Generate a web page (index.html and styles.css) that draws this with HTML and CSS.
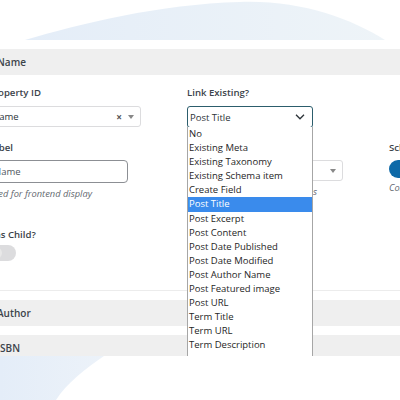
FILE: index.html
```html
<!DOCTYPE html>
<html>
<head>
<meta charset="utf-8">
<link rel="stylesheet" href="styles.css">
</head>
<body>
<div class="deco-top">
  <svg width="400" height="40" viewBox="0 0 400 40">
    <defs>
      <linearGradient id="gt" x1="0" x2="1" y1="0" y2="0">
        <stop offset="0" stop-color="#e4edf8"/>
        <stop offset="1" stop-color="#eef4f8"/>
      </linearGradient>
    </defs>
    <path d="M25 40 C 80 24 160 4 240 2 C 300 0 350 18 385 40 Z" fill="url(#gt)"/>
  </svg>
</div>
<div class="panel">
  <div class="band"></div>
  <div class="section-head">Name</div>
  <div class="fields">
    <div class="row row-1">
      <div class="field f-id">
        <label class="lbl">Property ID</label>
        <div class="s2">
          <span class="s2-text">Name</span>
          <span class="s2-clear">×</span>
          <span class="s2-arrow"></span>
        </div>
      </div>
      <div class="field f-link">
        <label class="lbl">Link Existing?</label>
        <div class="select-wrap">
          <div class="native-select">
            <span>Post Title</span>
            <svg class="chev" width="10" height="6" viewBox="0 0 10 6"><polyline points="1,0.8 5,4.8 9,0.8" fill="none" stroke="#2c3338" stroke-width="1.3"/></svg>
          </div>
          <ul class="dropdown">
            <li>No</li>
            <li>Existing Meta</li>
            <li>Existing Taxonomy</li>
            <li>Existing Schema item</li>
            <li>Create Field</li>
            <li class="sel">Post Title</li>
            <li>Post Excerpt</li>
            <li>Post Content</li>
            <li>Post Date Published</li>
            <li>Post Date Modified</li>
            <li>Post Author Name</li>
            <li>Post Featured image</li>
            <li>Post URL</li>
            <li>Term Title</li>
            <li>Term URL</li>
            <li>Term Description</li>
          </ul>
        </div>
      </div>
    </div>
    <div class="row row-2">
      <div class="field f-label">
        <label class="lbl">Label</label>
        <div class="input">Name</div>
        <p class="desc">Used for frontend display</p>
      </div>
      <div class="field f-type">
        <span class="lbl"></span>
        <div class="s2 s2-plain">
          <span class="s2-text"></span>
          <span class="s2-arrow"></span>
        </div>
        <p class="desc">s</p>
      </div>
      <div class="field f-schema">
        <label class="lbl">Schema</label>
        <div class="toggle on"><span class="knob"></span></div>
        <p class="desc">Connect</p>
      </div>
    </div>
    <div class="row row-3">
      <div class="field">
        <label class="lbl">Has Child?</label>
        <div class="toggle off"><span class="knob"></span></div>
      </div>
    </div>
  </div>
  <div class="section-head next">Author</div>
  <div class="section-head next">ISBN</div>
</div>
<div class="deco-bottom">
  <svg width="400" height="44" viewBox="0 0 400 44">
    <defs>
      <linearGradient id="gb" x1="0" x2="1" y1="0" y2="0">
        <stop offset="0" stop-color="#e4edf8"/>
        <stop offset="1" stop-color="#ecf2f9"/>
      </linearGradient>
    </defs>
    <path d="M0 0 L 104 0 C 86 12 66 28 56 44 L 0 44 Z" fill="url(#gb)"/>
  </svg>
</div>
</body>
</html>
```

FILE: styles.css
```css
* { box-sizing: border-box; }
html, body {
  margin: 0;
  padding: 0;
}
body {
  width: 400px;
  height: 400px;
  overflow: hidden;
  background: #ffffff;
  font-family: "Open Sans", "Noto Sans", sans-serif;
  font-size: 9.5px;
  color: #3c434a;
}
.deco-top, .deco-bottom { display: block; line-height: 0; }
.deco-top { height: 40px; }
.deco-bottom { height: 44px; }

.panel {
  height: 316px;
  overflow: hidden;
  margin-left: -20px;
  width: 440px;
  background: #ffffff;
}
.band { height: 9px; }
.section-head {
  height: 26px;
  line-height: 26px;
  background: #efefef;
  padding-left: 17px;
  font-size: 10px;
  font-weight: 600;
  color: #3c434a;
}
.section-head.next { margin-top: 9px; }

.fields {
  padding: 11px 0 29px 8px;
  border-bottom: 1px solid #ececec;
}
.row { display: flex; align-items: flex-start; }
.row-1 { gap: 46px; }
.row-2 { margin-top: 12.5px; }
.row-3 { margin-top: 28px; }

.field { display: flex; flex-direction: column; flex-shrink: 0; }
.lbl {
  display: block;
  height: 13px;
  line-height: 13px;
  font-size: 9.6px;
  font-weight: 600;
  color: #3c434a;
  white-space: nowrap;
}
.f-id { width: 153px; }
.f-id .lbl, .f-link .lbl { margin-bottom: 7px; }
.f-link { width: 126px; }
.f-label { width: 140px; }
.f-type { width: 143px; margin-left: 72px; }
.f-schema { margin-left: 46px; width: 60px; }
.f-label .lbl, .f-type .lbl, .f-schema .lbl { margin-bottom: 6.5px; }
.row-3 .lbl { margin-bottom: 4.5px; }

.s2 {
  height: 21px;
  border: 1px solid #dcdcde;
  border-radius: 3px;
  display: flex;
  align-items: center;
  padding: 0 6px 0 3px;
  background: #fff;
}
.s2-text { flex: 1; color: #2c3338; font-size: 9.5px; }
.s2-clear {
  font-size: 10px;
  font-weight: 700;
  color: #555;
  margin-right: 6px;
  line-height: 1;
}
.s2-arrow {
  width: 0;
  height: 0;
  border-left: 3px solid transparent;
  border-right: 3px solid transparent;
  border-top: 4px solid #888;
}

.select-wrap { position: relative; }
.native-select {
  height: 22px;
  border: 1.5px solid #2c5d6c;
  border-radius: 3px;
  display: flex;
  align-items: center;
  justify-content: space-between;
  padding: 0 7px 0 2px;
  color: #2c3338;
  font-size: 9.5px;
  background: #fff;
}
.chev { display: block; }

.dropdown {
  position: absolute;
  top: 100%;
  left: 0;
  width: 126px;
  margin: -1px 0 0 0;
  padding: 0 0 4px 0;
  list-style: none;
  background: #fff;
  border: 1px solid #a6a6a6;
  border-top: none;
  z-index: 5;
}
.dropdown li {
  height: 14.1px;
  line-height: 14.1px;
  padding-left: 1px;
  font-size: 9.5px;
  color: #262626;
  white-space: nowrap;
}
.dropdown li.sel {
  background: #3a8bec;
  color: #ffffff;
}

.input {
  height: 23px;
  border: 1px solid #8c8f94;
  border-radius: 4px;
  padding: 0 5px;
  line-height: 21px;
  color: #50575e;
  font-size: 9.5px;
}
.desc {
  margin: 3.5px 0 0 0;
  height: 13px;
  line-height: 13px;
  font-size: 9.3px;
  font-style: italic;
  color: #646970;
  white-space: nowrap;
}
.f-type .desc { text-align: left; padding-left: 113px; }
.f-schema .desc { margin-top: 3px; }

.toggle {
  position: relative;
  border-radius: 10px;
}
.toggle.on {
  width: 32px;
  height: 18px;
  background: #0e6aa8;
}
.toggle.off {
  width: 28px;
  height: 16px;
  background: #dcdcde;
}
.knob {
  position: absolute;
  top: 2px;
  width: 12px;
  height: 12px;
  border-radius: 50%;
  background: #fff;
}
.toggle.off .knob { left: 2px; background: #e8e8e8; }
.toggle.on .knob { right: 3px; top: 3px; }
```
